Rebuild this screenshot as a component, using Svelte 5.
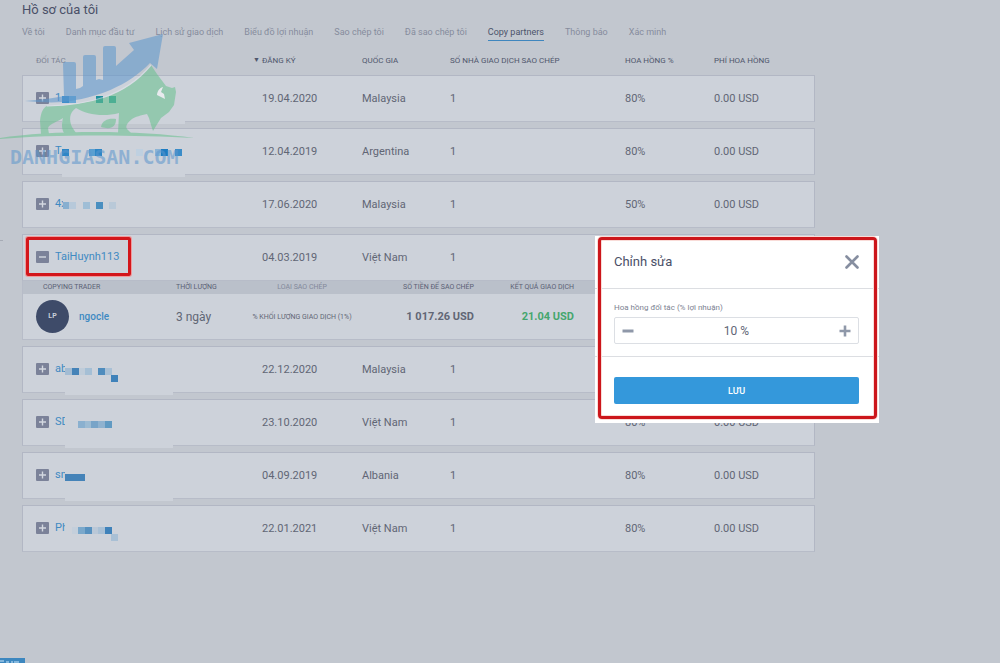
<script>
  let tabs = [
    "Về tôi",
    "Danh mục đầu tư",
    "Lịch sử giao dịch",
    "Biểu đồ lợi nhuận",
    "Sao chép tôi",
    "Đã sao chép tôi",
    "Copy partners",
    "Thông báo",
    "Xác minh",
  ];
  let activeTab = "Copy partners";

  // patch: [x, y, width, height] of the cover over the name
  // blocks: [x, y, colour] of the tiles that hide the rest of the name
  let partners = [
    { name: "1", patch: [39, 2, 123, 46], blocks: [[39, 20, "#3f8fca"], [46, 20, "#68a6d3"], [73, 20, "#1f8f9e"], [86, 20, "#2f9a9c"]], date: "19.04.2020", country: "Malaysia", count: 1, share: "80%", fee: "0.00 USD" },
    { name: "T", patch: [39, 2, 123, 46], blocks: [[39, 20, "#2d86c6"], [66, 20, "#5b9fd0"], [72, 20, "#2d86c6"], [113, 20, "#bfd0e0"], [132, 20, "#8ab4d6"], [138, 20, "#1d7cc2"], [152, 20, "#3a8cc8"]], date: "12.04.2019", country: "Argentina", count: 1, share: "80%", fee: "0.00 USD" },
    { name: "4x", patch: [40, 14, 60, 18], blocks: [[40, 20, "#87afd0"], [46, 20, "#b7c9da"], [60, 20, "#9fbed6"], [73, 20, "#4a8fc0"], [86, 20, "#b9c9d8"]], date: "17.06.2020", country: "Malaysia", count: 1, share: "50%", fee: "0.00 USD" },
    { name: "TaiHuynh113", date: "04.03.2019", country: "Việt Nam", count: 1, share: "", fee: "", open: true },
    { name: "ab", patch: [42, 2, 108, 46], blocks: [[42, 21, "#a3bcd3"], [49, 21, "#4583b8"], [56, 21, "#bfccd9"], [62, 21, "#a5bfd5"], [75, 21, "#4f8cbd"], [82, 21, "#a9c0d5"], [88, 28, "#3f82ba"]], date: "22.12.2020", country: "Malaysia", count: 1, share: "", fee: "" },
    { name: "SD", patch: [42, 2, 108, 46], blocks: [[55, 21, "#8ab0cf"], [62, 21, "#9cbbd3"], [68, 21, "#78a4c8"], [75, 21, "#8fb2cf"], [82, 21, "#619ac2"]], date: "23.10.2020", country: "Việt Nam", count: 1, share: "80%", fee: "0.00 USD" },
    { name: "sn", patch: [42, 2, 108, 46], blocks: [[42, 21, "#4583b8"], [49, 21, "#4583b8"], [55, 21, "#4583b8"]], date: "04.09.2019", country: "Albania", count: 1, share: "80%", fee: "0.00 USD" },
    { name: "Ph", patch: [42, 2, 108, 40], blocks: [[49, 21, "#c4cfdb"], [55, 21, "#7aa8cb"], [62, 21, "#5791bf"], [69, 21, "#bac8d7"], [75, 21, "#a9c0d5"], [82, 21, "#3f82ba"], [88, 28, "#a9c0d5"]], date: "22.01.2021", country: "Việt Nam", count: 1, share: "80%", fee: "0.00 USD" },
  ];

  let commission = 10;
  let showModal = true;

  const toggle = (partner) => {
    partner.open = !partner.open;
    partners = partners;
  };
</script>

<main>
  <h1>Hồ sơ của tôi</h1>

  <nav>
    {#each tabs as tab}
      <a href="#{tab}" class:active={tab === activeTab}>{tab}</a>
    {/each}
  </nav>

  <table class="partners">
    <colgroup>
      <col />
      <col class="c-date" />
      <col class="c-country" />
      <col class="c-count" />
      <col class="c-share" />
      <col class="c-fee" />
    </colgroup>
    <thead>
      <tr>
        <th class="muted">ĐỐI TÁC</th>
        <th class="sorted"><span>▼</span>ĐĂNG KÝ</th>
        <th>QUỐC GIA</th>
        <th>SỐ NHÀ GIAO DỊCH SAO CHÉP</th>
        <th>HOA HỒNG %</th>
        <th>PHÍ HOA HỒNG</th>
      </tr>
    </thead>
    {#each partners as partner}
      <tbody>
        <tr class="row">
          <td class="name-cell">
            <button class="partner" class:marked={partner.open} on:click={() => toggle(partner)}>
              <svg width="13" height="13" viewBox="0 0 13 13">
                <rect width="13" height="12" rx="1" fill="#7b8299" />
                <path d={partner.open ? "M3 6h7" : "M3 6h7M6.5 2.5v7"} stroke="#d3d8e0" stroke-width="1.4" />
              </svg>
              {partner.name}
            </button>
            {#if partner.blocks}
              <svg class="mosaic" width="170" height="50" viewBox="0 0 170 50">
                <rect x={partner.patch[0]} y={partner.patch[1]} width={partner.patch[2]} height={partner.patch[3]} fill="#cdd2da" />
                {#each partner.blocks as [x, y, color]}
                  <rect {x} {y} width="7" height="7" fill={color} />
                {/each}
              </svg>
            {/if}
          </td>
          <td>{partner.date}</td>
          <td>{partner.country}</td>
          <td>{partner.count}</td>
          <td>{partner.share}</td>
          <td>{partner.fee}</td>
        </tr>
        {#if partner.open}
          <tr>
            <td class="detail" colspan="6">
              <table>
                <thead>
                  <tr>
                    <th class="d-trader">COPYING TRADER</th>
                    <th class="d-time">THỜI LƯỢNG</th>
                    <th class="d-type">LOẠI SAO CHÉP</th>
                    <th class="d-amount">SỐ TIỀN ĐỂ SAO CHÉP</th>
                    <th class="d-result">KẾT QUẢ GIAO DỊCH</th>
                    <th></th>
                  </tr>
                </thead>
                <tbody>
                  <tr>
                    <td>
                      <a class="trader" href="#ngocle"><span class="avatar">LP</span>ngocle</a>
                    </td>
                    <td class="d-time">3 ngày</td>
                    <td class="d-type">% KHỐI LƯỢNG GIAO DỊCH (1%)</td>
                    <td class="d-amount">1 017.26 USD</td>
                    <td class="d-result">21.04 USD</td>
                    <td></td>
                  </tr>
                </tbody>
              </table>
            </td>
          </tr>
        {/if}
      </tbody>
    {/each}
  </table>
</main>

<div class="watermark">
  <svg width="195" height="115" viewBox="0 30 195 115">
    <path
      d="M63 64q0-2 2-2h9q2 0 2 2v25l4-1 3-2V57q0-2 2-2h9q2 0 2 2v23l3-1 4 1V48q0-2 2-2h9q2 0 2 2v18l18-16-5-7 34-9-6 35-7-6c-22 23-53 35-87 39-14 1-26 0-38-1 15-1 29-3 39-5z"
      fill="#5c96cd"
    />
    <g fill="#66c18d">
      <path
        d="M47 106C85 105 124 98 151 65L157 74L166 86L172 88L175 87L176 92L174 105L169 112L161 118L156 126L153 131L151 125L149 118L147 114C141 115 135 117 132 119C128 122 125 126 127 129L131 133H118L119 113C104 117 87 115 76 108C69 113 69 120 72 127L76 133H64C61 128 62 122 63 118C58 122 50 123 48 128L49 134H41L40 121C41 112 43 108 47 106z"
      />
      <path d="M101 127c1-7 8-9 15-8 0 8-5 11-15 8z" />
      <path d="M0 138c50-8 140-8 194 0-55-3-140-4-194 1z" />
    </g>
    <path d="M47 106C85 105 124 98 151 65" fill="none" stroke="#e2e7ee" stroke-width="1.2" />
    <path d="M163 87c-4 1-6 5-6 8l8 4-1-5-3-2z" fill="#fff" />
  </svg>
  <span>DANHGIASAN.COM</span>
</div>

<div class="edge"></div>
<div class="status">
  <svg width="25" height="5" viewBox="0 0 25 5">
    <path d="M0 3h4M6 4h3M11 4h2M14 4h5" stroke="#9cc8e8" stroke-width="1.5" />
  </svg>
</div>

{#if showModal}
  <form class="modal" on:submit|preventDefault>
    <header>
      <h2>Chỉnh sửa</h2>
      <button type="button" aria-label="Đóng" on:click={() => (showModal = false)}>
        <svg width="14" height="14" viewBox="0 0 14 14">
          <path d="M1.5 1.5l11 11M12.5 1.5l-11 11" stroke="#868ea0" stroke-width="2.6" stroke-linecap="round" />
        </svg>
      </button>
    </header>
    <section>
      <label for="commission">Hoa hồng đối tác (% lợi nhuận)</label>
      <div class="stepper">
        <button type="button" aria-label="Giảm" on:click={() => commission--}>
          <svg width="12" height="12" viewBox="0 0 12 12"><path d="M.5 6h11" stroke="#8f98a9" stroke-width="3" /></svg>
        </button>
        <input id="commission" type="text" value="{commission} %" />
        <button type="button" aria-label="Tăng" on:click={() => commission++}>
          <svg width="12" height="12" viewBox="0 0 12 12"><path d="M.5 6h11M6 .5v11" stroke="#8f98a9" stroke-width="2.6" /></svg>
        </button>
      </div>
    </section>
    <footer>
      <button class="save">LƯU</button>
    </footer>
  </form>
{/if}

<style>
  :global(body) {
    background: #c2c7cf;
    color: #616675;
    font-family: Roboto, "Liberation Sans", sans-serif;
    font-size: 11px;
  }
  main {
    padding: 1px 185px 20px 22px;
  }
  button,
  input {
    font: inherit;
    color: inherit;
    background: none;
    border: 0;
    padding: 0;
    margin: 0;
  }
  button {
    cursor: pointer;
  }
  a {
    text-decoration: none;
  }
  svg {
    display: block;
    flex: none;
  }
  h1,
  h2 {
    margin: 0;
    font-size: 13px;
    font-weight: 400;
    line-height: 18px;
    color: #4a5068;
  }

  nav {
    display: flex;
    gap: 21px;
    padding-top: 5px;
    height: 26px;
    box-sizing: border-box;
  }
  nav a {
    font-size: 9px;
    line-height: 16px;
    height: 16px;
    color: #868c9d;
    white-space: nowrap;
  }
  nav a.active {
    color: #4c536a;
    border-bottom: 1px solid #3f86be;
  }

  table {
    width: 100%;
    table-layout: fixed;
    border-spacing: 0;
  }
  th {
    text-align: left;
    font-weight: 400;
    color: #4f566c;
    white-space: nowrap;
  }
  td,
  th {
    padding: 0;
  }
  .c-date {
    width: 100px;
  }
  .c-country {
    width: 88px;
  }
  .c-count {
    width: 175px;
  }
  .c-share {
    width: 89px;
  }
  .c-fee {
    width: 101px;
  }
  .partners > thead th {
    height: 30px;
    font-size: 8px;
  }
  .partners > thead th.muted {
    padding-left: 14px;
    color: #7d8394;
  }
  .sorted {
    position: relative;
  }
  .sorted span {
    position: absolute;
    left: -9px;
    font-size: 7px;
    line-height: 9px;
  }
  .partners > tbody::after {
    content: "";
    display: block;
    height: 6px;
  }
  .row td {
    height: 44px;
    padding-bottom: 1px;
    background: #cdd2da;
    border-top: 1px solid #b2b7c4;
    border-bottom: 1px solid #b7bcc8;
  }
  .row td:first-child {
    border-left: 1px solid #b2b7c4;
  }
  .row td:last-child {
    border-right: 1px solid #b2b7c4;
  }
  .name-cell {
    position: relative;
    padding-left: 13px;
  }
  .partner {
    display: flex;
    align-items: center;
    gap: 6px;
    position: relative;
    line-height: 20px;
    color: #3f8ac2;
  }
  .marked::after {
    content: "";
    position: absolute;
    inset: -10px -12px -9px -10px;
    border: 3px solid #d3161b;
    border-radius: 2px;
    box-shadow: 0 0 0 1px #ef9a9c;
  }
  .mosaic {
    position: absolute;
    left: 0;
    top: 0;
  }

  .detail {
    background: #cdd2da;
    border: 1px solid #b7bcc8;
    border-top: 0;
  }
  .detail th {
    height: 13px;
    background: #bac0ca;
    font-size: 7px;
    line-height: 13px;
    color: #5b6175;
  }
  .detail th.d-trader {
    width: 133px;
    padding-left: 20px;
  }
  .detail td {
    height: 45px;
  }
  .d-time {
    width: 58px;
  }
  .d-type {
    width: 136px;
    text-align: center;
  }
  .detail th.d-type {
    color: #82889a;
  }
  td.d-time {
    font-size: 12px;
  }
  td.d-type {
    font-size: 7px;
    white-space: nowrap;
  }
  .d-amount {
    width: 104px;
  }
  .d-result {
    width: 100px;
  }
  .d-amount,
  .d-result {
    text-align: right;
  }
  td.d-amount,
  td.d-result {
    font-weight: 700;
  }
  td.d-result {
    color: #45a66e;
  }
  .trader {
    display: flex;
    align-items: center;
    gap: 10px;
    padding-left: 13px;
    font-size: 10px;
    font-weight: 500;
    color: #3f8ac2;
  }
  .avatar {
    width: 33px;
    height: 33px;
    border-radius: 50%;
    background: #3e4b69;
    color: #c9cfdb;
    font-size: 7px;
    font-weight: 700;
    line-height: 33px;
    text-align: center;
  }

  .watermark {
    position: absolute;
    left: 0;
    top: 30px;
    opacity: 0.55;
    pointer-events: none;
  }
  .watermark span {
    display: block;
    padding-left: 10px;
    font: 700 20px/24px "DejaVu Sans Mono", monospace;
    color: #5c96cd;
  }
  .edge {
    position: absolute;
    left: 0;
    top: 0;
    width: 3px;
    height: 240px;
    border-bottom: 1px solid #a6abb5;
  }
  .status {
    position: fixed;
    left: 0;
    bottom: 0;
    background: #3d87bf;
  }

  .modal {
    position: absolute;
    left: 595px;
    top: 236px;
    width: 284px;
    background: #fff;
  }
  .modal::after {
    content: "";
    position: absolute;
    inset: 1px 2px 4px 3px;
    border: 3px solid #cc161b;
    border-radius: 4px;
    box-shadow: 0 0 0 1px #f9dcd8, inset 0 0 0 1px #f9dcd8;
    pointer-events: none;
  }
  .modal header,
  .modal section,
  .modal footer {
    padding: 0 20px 0 19px;
  }
  .modal header {
    display: flex;
    align-items: center;
    justify-content: space-between;
    height: 52px;
    border-bottom: 1px solid #dcdee2;
  }
  .modal section {
    padding-top: 13px;
    padding-bottom: 12px;
    border-bottom: 1px solid #dcdee2;
  }
  .modal label {
    display: block;
    font-size: 8px;
    line-height: 12px;
    margin-bottom: 3px;
    color: #7c8292;
  }
  .stepper {
    display: flex;
    align-items: center;
    height: 25px;
    padding: 0 7px;
    border: 1px solid #dcdfe4;
    border-radius: 2px;
  }
  .stepper input {
    flex: 1;
    min-width: 0;
    font-size: 12px;
    text-align: center;
  }
  .modal footer {
    padding-top: 20px;
    padding-bottom: 19px;
  }
  .save {
    display: block;
    width: 100%;
    height: 27px;
    border-radius: 2px;
    background: #3498db;
    color: #fff;
    font-size: 9px;
    font-weight: 500;
  }
</style>
